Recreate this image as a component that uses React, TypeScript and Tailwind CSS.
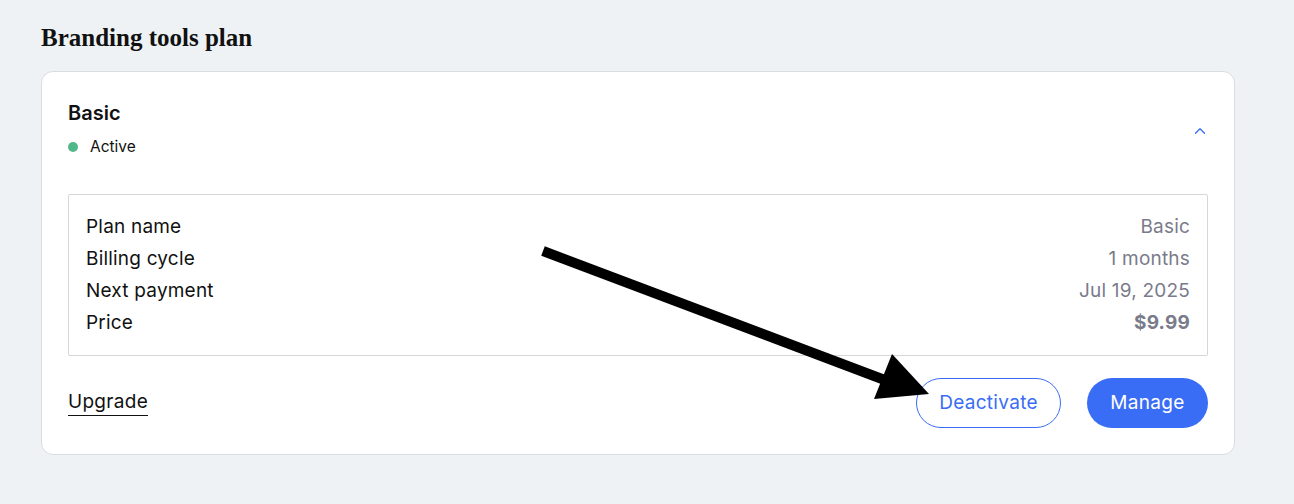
import { ChevronUp } from "lucide-react";

const rows = [
  { label: "Plan name", value: "Basic" },
  { label: "Billing cycle", value: "1 months" },
  { label: "Next payment", value: "Jul 19, 2025" },
  { label: "Price", value: "$9.99", bold: true },
];

// arrow annotation drawn over the card
function Arrow() {
  return (
    <svg
      className="pointer-events-none absolute left-0 top-0"
      width="1294"
      height="504"
      viewBox="0 0 1294 504"
    >
      <line x1="543" y1="251" x2="890" y2="382" stroke="#000" strokeWidth="10" />
      <polygon points="929,394 892,354 874,399" fill="#000" />
    </svg>
  );
}

export default function App() {
  return (
    <div
      className="relative h-[504px] w-[1294px] bg-[#eef2f5] px-[41px] pt-[23px]"
      style={{ fontFamily: "Inter, 'Open Sans', sans-serif" }}
    >
      <h2
        className="text-[25px] font-bold leading-[29px] text-[#111]"
        style={{ fontFamily: "'Liberation Serif', serif" }}
      >
        Branding tools plan
      </h2>

      <div className="mt-[19px] w-[1194px] rounded-[12px] border border-[#d8dde2] bg-white px-[26px] pb-[26px] pt-[28px]">
        <div className="flex items-start justify-between">
          <div>
            <div className="text-[20px] font-semibold leading-[26px] text-[#111]">Basic</div>
            <div className="mt-[11px] flex items-center gap-[12px]">
              <span className="h-[10px] w-[10px] rounded-full bg-[#52b788]" />
              <span className="text-[15.5px] leading-[20px] text-[#111]">Active</span>
            </div>
          </div>
          <ChevronUp className="mr-[-1px] mt-[22px] h-[18px] w-[18px] text-[#3a6df5]" strokeWidth={1.75} />
        </div>

        <div className="mt-[37px] rounded-[2px] border border-[#d6d6d6] px-[17px] py-[16px]">
          {rows.map((r) => (
            <div key={r.label} className="flex h-[32px] items-center justify-between text-[19px] tracking-[0.2px]">
              <span className="text-[#111]">{r.label}</span>
              <span className={r.bold ? "font-bold text-[#7a7b8a]" : "text-[#7a7b8a]"}>
                {r.value}
              </span>
            </div>
          ))}
        </div>

        <div className="mt-[22px] flex items-center justify-between">
          <a className="border-b border-[#111] pb-[1px] text-[19px] leading-[24px] tracking-[0.3px] text-[#111]">
            Upgrade
          </a>
          <div className="flex items-center gap-[26px]">
            <button className="h-[50px] w-[145px] rounded-full border border-[#3a6df5] bg-white text-[19px] tracking-[0.3px] text-[#3a6df5]">
              Deactivate
            </button>
            <button className="h-[50px] w-[121px] rounded-full bg-[#3a6df5] text-[19px] tracking-[0.3px] text-white">
              Manage
            </button>
          </div>
        </div>
      </div>

      <Arrow />
    </div>
  );
}
